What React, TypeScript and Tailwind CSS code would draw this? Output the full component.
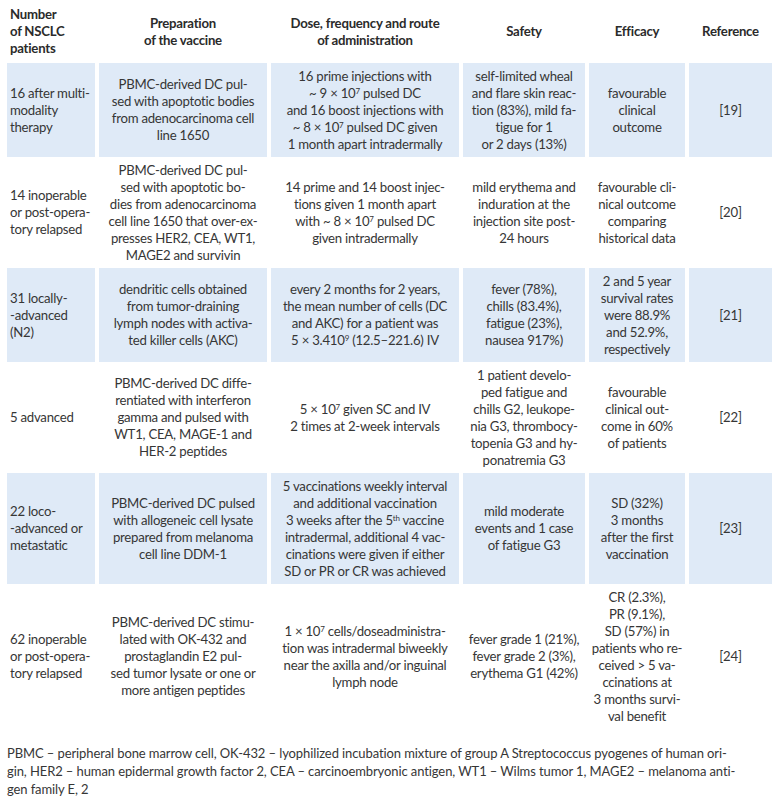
import React from "react";

type Row = {
  patients: React.ReactNode[];
  prep: React.ReactNode[];
  dose: React.ReactNode[];
  safety: React.ReactNode[];
  efficacy: React.ReactNode[];
  ref: string;
};

const Pow = ({ base, exp }: { base: string; exp: string }) => (
  <>
    {base}
    <span className="inline-block text-[8px] leading-[8px] align-[4px]">{exp}</span>
  </>
);

const rows: Row[] = [
  {
    patients: ["16 after multi-", "modality", "therapy"],
    prep: ["PBMC-derived DC pul-", "sed with apoptotic bodies", "from adenocarcinoma cell", "line 1650"],
    dose: [
      "16 prime injections with",
      <>~ 9 × <Pow base="10" exp="7" /> pulsed DC</>,
      "and 16 boost injections with",
      <>~ 8 × <Pow base="10" exp="7" /> pulsed DC given</>,
      "1 month apart intradermally",
    ],
    safety: ["self-limited wheal", "and flare skin reac-", "tion (83%), mild fa-", "tigue for 1", "or 2 days (13%)"],
    efficacy: ["favourable", "clinical", "outcome"],
    ref: "[19]",
  },
  {
    patients: ["14 inoperable", "or post-opera-", "tory relapsed"],
    prep: [
      "PBMC-derived DC pul-",
      "sed with apoptotic bo-",
      "dies from adenocarcinoma",
      "cell line 1650 that over-ex-",
      "presses HER2, CEA, WT1,",
      "MAGE2 and survivin",
    ],
    dose: [
      "14 prime and 14 boost injec-",
      "tions given 1 month apart",
      <>with ~ 8 × <Pow base="10" exp="7" /> pulsed DC</>,
      "given intradermally",
    ],
    safety: ["mild erythema and", "induration at the", "injection site post-", "24 hours"],
    efficacy: ["favourable cli-", "nical outcome", "comparing", "historical data"],
    ref: "[20]",
  },
  {
    patients: ["31 locally-", "-advanced", "(N2)"],
    prep: ["dendritic cells obtained", "from tumor-draining", "lymph nodes with activa-", "ted killer cells (AKC)"],
    dose: [
      "every 2 months for 2 years,",
      "the mean number of cells (DC",
      "and AKC) for a patient was",
      <>5 × <Pow base="3.410" exp="9" /> (12.5–221.6) IV</>,
    ],
    safety: ["fever (78%),", "chills (83.4%),", "fatigue (23%),", "nausea 917%)"],
    efficacy: ["2 and 5 year", "survival rates", "were 88.9%", "and 52.9%,", "respectively"],
    ref: "[21]",
  },
  {
    patients: ["5 advanced"],
    prep: [
      "PBMC-derived DC diffe-",
      "rentiated with interferon",
      "gamma and pulsed with",
      "WT1, CEA, MAGE-1 and",
      "HER-2 peptides",
    ],
    dose: [<>5 × <Pow base="10" exp="7" /> given SC and IV</>, "2 times at 2-week intervals"],
    safety: [
      "1 patient develo-",
      "ped fatigue and",
      "chills G2, leukope-",
      "nia G3, thrombocy-",
      "topenia G3 and hy-",
      "ponatremia G3",
    ],
    efficacy: ["favourable", "clinical out-", "come in 60%", "of patients"],
    ref: "[22]",
  },
  {
    patients: ["22 loco-", "-advanced or", "metastatic"],
    prep: ["PBMC-derived DC pulsed", "with allogeneic cell lysate", "prepared from melanoma", "cell line DDM-1"],
    dose: [
      "5 vaccinations weekly interval",
      "and additional vaccination",
      <>3 weeks after the <Pow base="5" exp="th" /> vaccine</>,
      "intradermal, additional 4 vac-",
      "cinations were given if either",
      "SD or PR or CR was achieved",
    ],
    safety: ["mild moderate", "events and 1 case", "of fatigue G3"],
    efficacy: ["SD (32%)", "3 months", "after the first", "vaccination"],
    ref: "[23]",
  },
  {
    patients: ["62 inoperable", "or post-opera-", "tory relapsed"],
    prep: [
      "PBMC-derived DC stimu-",
      "lated with OK-432 and",
      "prostaglandin E2 pul-",
      "sed tumor lysate or one or",
      "more antigen peptides",
    ],
    dose: [
      <>1 × <Pow base="10" exp="7" /> cells/doseadministra-</>,
      "tion was intradermal biweekly",
      "near the axilla and/or inguinal",
      "lymph node",
    ],
    safety: ["fever grade 1 (21%),", "fever grade 2 (3%),", "erythema G1 (42%)"],
    efficacy: [
      "CR (2.3%),",
      "PR (9.1%),",
      "SD (57%) in",
      "patients who re-",
      "ceived > 5 va-",
      "ccinations at",
      "3 months survi-",
      "val benefit",
    ],
    ref: "[24]",
  },
];

function Lines({ items }: { items: React.ReactNode[] }) {
  return (
    <>
      {items.map((l, i) => (
        <div key={i} className="whitespace-nowrap">
          {l}
        </div>
      ))}
    </>
  );
}

export default function App() {
  return (
    <div className="min-h-screen bg-white text-[#363636] font-['Lato',sans-serif] text-[13.2px] leading-[17px] tracking-[-0.25px] px-[3px]">
      <table className="table-fixed border-separate border-spacing-x-[4px] border-spacing-y-0 w-[773px]">
        <colgroup>
          <col className="w-[88px]" />
          <col className="w-[168px]" />
          <col className="w-[188px]" />
          <col className="w-[122px]" />
          <col className="w-[96px]" />
          <col className="w-[83px]" />
        </colgroup>
        <thead>
          <tr className="text-[#2b2b2b]">
            <th className="text-left align-middle py-[6px] pl-[3px] font-bold">
              <Lines items={["Number", "of NSCLC", "patients"]} />
            </th>
            <th className="text-center align-middle font-bold">
              <Lines items={["Preparation", "of the vaccine"]} />
            </th>
            <th className="text-center align-middle font-bold">
              <Lines items={["Dose, frequency and route", "of administration"]} />
            </th>
            <th className="text-center align-middle font-bold">Safety</th>
            <th className="text-center align-middle font-bold">Efficacy</th>
            <th className="text-center align-middle font-bold">Reference</th>
          </tr>
        </thead>
        <tbody>
          {rows.map((r, i) => {
            const bg = i % 2 === 0 ? "bg-[#dfeaf7]" : "bg-white";
            const cell = `${bg} text-center align-middle py-[4.5px]`;
            return (
              <tr key={i}>
                <td className={`${bg} text-left align-middle py-[4.5px] pl-[3px]`}>
                  <Lines items={r.patients} />
                </td>
                <td className={cell}>
                  <Lines items={r.prep} />
                </td>
                <td className={cell}>
                  <Lines items={r.dose} />
                </td>
                <td className={cell}>
                  <Lines items={r.safety} />
                </td>
                <td className={cell}>
                  <Lines items={r.efficacy} />
                </td>
                <td className={cell}>{r.ref}</td>
              </tr>
            );
          })}
        </tbody>
      </table>
      <div className="mt-[15px] pl-[4px] text-[13px] leading-[18px] tracking-[-0.1px]">
        <div className="whitespace-nowrap">
          PBMC – peripheral bone marrow cell, OK-432 – lyophilized incubation mixture of group A Streptococcus pyogenes of human ori-
        </div>
        <div className="whitespace-nowrap">
          gin, HER2 – human epidermal growth factor 2, CEA – carcinoembryonic antigen, WT1 – Wilms tumor 1, MAGE2 – melanoma anti-
        </div>
        <div className="whitespace-nowrap">gen family E, 2</div>
      </div>
    </div>
  );
}
